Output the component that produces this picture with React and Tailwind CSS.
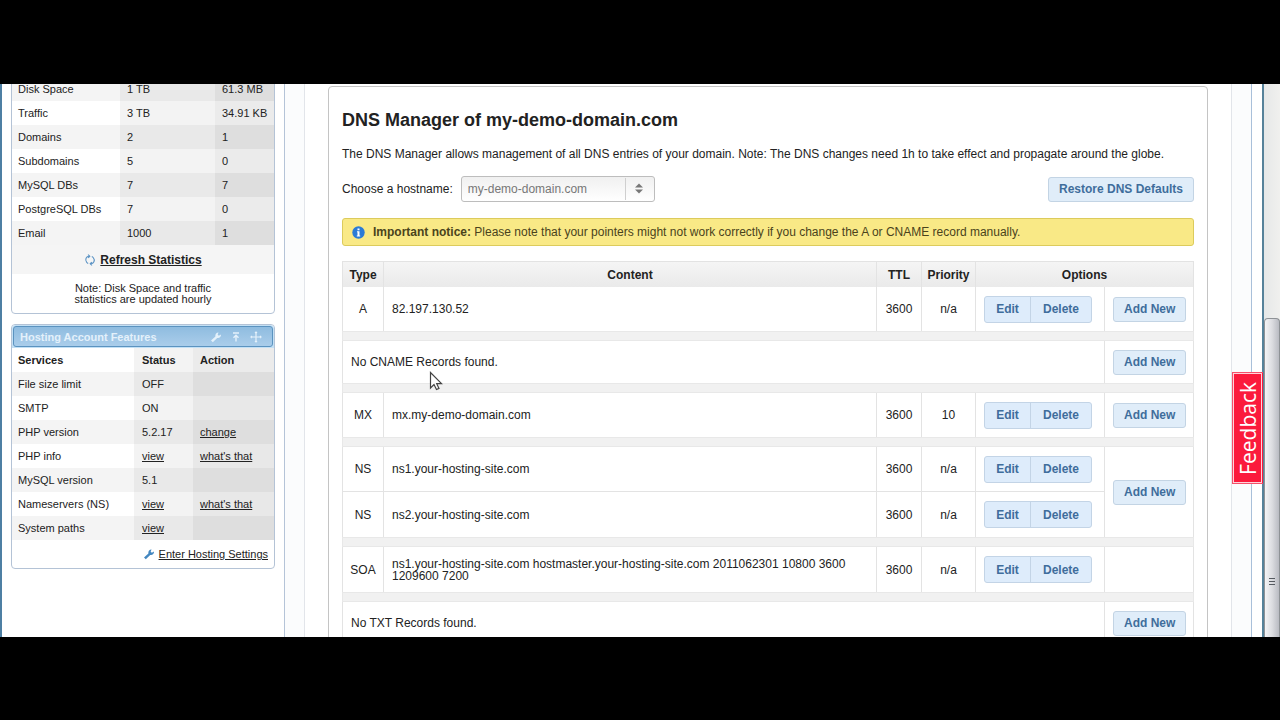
import React from "react";

const usage = [
  ["Disk Space", "1 TB", "61.3 MB"],
  ["Traffic", "3 TB", "34.91 KB"],
  ["Domains", "2", "1"],
  ["Subdomains", "5", "0"],
  ["MySQL DBs", "7", "7"],
  ["PostgreSQL DBs", "7", "0"],
  ["Email", "1000", "1"],
];

const features = [
  { name: "File size limit", status: "OFF" },
  { name: "SMTP", status: "ON" },
  { name: "PHP version", status: "5.2.17", action: "change" },
  { name: "PHP info", status: "view", statusLink: true, action: "what's that" },
  { name: "MySQL version", status: "5.1" },
  { name: "Nameservers (NS)", status: "view", statusLink: true, action: "what's that" },
  { name: "System paths", status: "view", statusLink: true },
];

function WrenchIcon({ className }) {
  return (
    <svg viewBox="0 0 12 12" className={className} fill="currentColor" aria-hidden="true">
      <path d="M1 9.6 5.4 5.4C5 3.6 6.2 1.6 8.6 1.6L7.6 3.6 8.8 4.8 11 3.6C11.2 6 9.2 7.4 7.2 6.9L2.8 11.2Z" />
    </svg>
  );
}

function RefreshIcon() {
  return (
    <svg viewBox="0 0 12 12" className="h-3 w-3 text-[#5b93c4]" fill="none" stroke="currentColor" strokeWidth="1.1" aria-hidden="true">
      <path d="M5.500 2.200C2 2 .8 6 2.600 8.200 3 8.800 3.600 9.200 4.200 9.500M6.500 9.800C10 10 11.200 6 9.400 3.800 9 3.200 8.400 2.800 7.800 2.500" />
      <path d="M4 .6 5.800 2.200 4.200 4M8 11.400 6.200 9.800 7.800 8" />
    </svg>
  );
}

function UsagePanel() {
  return (
    <section className="rounded-b border border-[#b4c3d6] bg-white">
      <table className="w-full table-fixed border-separate border-spacing-0">
        <colgroup>
          <col className="w-[108px]" />
          <col className="w-[95px]" />
          <col />
        </colgroup>
        <tbody>
          {usage.map(([name, limit, used], i) => (
            <tr key={name} className="h-6">
              <th scope="row" className={`px-1.5 text-left font-normal ${i % 2 ? "bg-white" : "bg-[#f4f4f4]"}`}>{name}</th>
              <td className={`px-[7px] ${i % 2 ? "bg-[#f3f3f3]" : "bg-[#e9e9e9]"}`}>{limit}</td>
              <td className={`whitespace-nowrap px-[7px] ${i % 2 ? "bg-[#ebebeb]" : "bg-[#dedede]"}`}>{used}</td>
            </tr>
          ))}
        </tbody>
      </table>
      <div className="flex h-[29px] items-center justify-center gap-1 bg-[#f5f5f5]">
        <RefreshIcon />
        <a href="#refresh" className="text-[12px] font-bold underline">Refresh Statistics</a>
      </div>
      <p className="px-14 pt-[9px] pb-2 text-center leading-[11px]">Note: Disk Space and traffic statistics are updated hourly</p>
    </section>
  );
}

function FeaturesPanel() {
  return (
    <section className="rounded border border-[#b4c3d6] bg-white">
      <header className="rounded-t bg-[#c3e0f5] p-px">
        <div className="flex h-[21px] items-center justify-between rounded-[3px] border border-[#5b93c0] bg-linear-to-b from-[#8fbce0] to-[#aacdea] px-1.5 text-[#e4f1fb]">
          <h2 className="font-bold">Hosting Account Features</h2>
          <div className="flex gap-2 pr-1">
            <WrenchIcon className="h-3 w-3" />
            <svg viewBox="0 0 12 12" className="h-3 w-3" fill="none" stroke="currentColor" strokeWidth="1.4" aria-hidden="true">
              <path d="M3 2H9M6 10.500V4.500M3.500 6.800 6 4.200 8.500 6.800" />
            </svg>
            <svg viewBox="0 0 12 12" className="h-3 w-3" fill="none" stroke="currentColor" strokeWidth="1.200" aria-hidden="true">
              <path d="M6 1V11M1 6H11" />
              <path d="M5 2 6 1 7 2M5 10 6 11 7 10M2 5 1 6 2 7M10 5 11 6 10 7" />
            </svg>
          </div>
        </div>
      </header>
      <table className="w-full table-fixed border-separate border-spacing-0">
        <colgroup>
          <col className="w-[122px]" />
          <col className="w-[59px]" />
          <col />
        </colgroup>
        <thead>
          <tr className="h-6 text-left">
            <th className="bg-white px-1.5">Services</th>
            <th className="bg-[#f3f3f3] px-2">Status</th>
            <th className="bg-[#ebebeb] px-[7px]">Action</th>
          </tr>
        </thead>
        <tbody>
          {features.map((f, i) => (
            <tr key={f.name} className="h-6">
              <td className={`px-1.5 ${i % 2 ? "bg-white" : "bg-[#f4f4f4]"}`}>{f.name}</td>
              <td className={`px-2 ${i % 2 ? "bg-[#f3f3f3]" : "bg-[#e9e9e9]"}`}>
                {f.statusLink ? <a href="#view" className="underline">{f.status}</a> : f.status}
              </td>
              <td className={`px-[7px] ${i % 2 ? "bg-[#e8e8e8]" : "bg-[#dedede]"}`}>
                {f.action && <a href="#action" className="underline">{f.action}</a>}
              </td>
            </tr>
          ))}
        </tbody>
      </table>
      <div className="flex h-7 items-center justify-end gap-1 pr-1.5">
        <WrenchIcon className="h-3 w-3 text-[#4387c0]" />
        <a href="#settings" className="underline">Enter Hosting Settings</a>
      </div>
    </section>
  );
}

const buttonText = "text-[12px] font-bold text-[#3f6d9c]";

function BlueButton({ children }) {
  return (
    <button type="button" className={`h-[25px] whitespace-nowrap rounded-[3px] border border-[#c3d4e4] bg-[#e0edf9] px-2.5 ${buttonText}`}>
      {children}
    </button>
  );
}

function EditDelete() {
  return (
    <div className="flex h-[27px] w-[108px] rounded-[3px] border border-[#c3d4e6] bg-[#deecfb]">
      <button type="button" className={`w-[46px] border-r border-[#c3d4e6] ${buttonText}`}>Edit</button>
      <button type="button" className={`flex-1 ${buttonText}`}>Delete</button>
    </div>
  );
}

const cell = "border-r border-[#e3e3e3]";

function RecordCells({ type, content, ttl = "3600", priority = "n/a", line = "" }) {
  return (
    <>
      <td className={`${cell} ${line} border-l text-center`}>{type}</td>
      <td className={`${cell} ${line} px-2 leading-3`}>{content}</td>
      <td className={`${cell} ${line} text-center`}>{ttl}</td>
      <td className={`${cell} ${line} text-center`}>{priority}</td>
      <td className={`${cell} ${line} px-2`}><EditDelete /></td>
    </>
  );
}

function AddCell({ rows = 1, empty = false }) {
  return (
    <td rowSpan={rows} className={`${cell} px-2`}>
      {!empty && <BlueButton>Add New</BlueButton>}
    </td>
  );
}

function Divider() {
  return (
    <tr className="h-2.5">
      <td colSpan={6} className="border border-[#e8e8e8] bg-[#f1f1f1]" />
    </tr>
  );
}

function EmptyRow({ kind }) {
  return (
    <tr className="h-[42px]">
      <td colSpan={5} className={`${cell} border-l px-2`}>No {kind} Records found.</td>
      <AddCell />
    </tr>
  );
}

function DnsTable() {
  const head = "border-t border-r border-[#e3e3e3] bg-linear-to-b from-[#f5f5f5] to-[#eaeaea]";
  return (
    <table className="mt-[15px] w-full table-fixed border-separate border-spacing-0">
      <colgroup>
        <col className="w-[42px]" />
        <col />
        <col className="w-[45px]" />
        <col className="w-[54px]" />
        <col className="w-[129px]" />
        <col className="w-[89px]" />
      </colgroup>
      <thead>
        <tr className="h-[26px]">
          <th className={`${head} border-l`}>Type</th>
          <th className={head}>Content</th>
          <th className={head}>TTL</th>
          <th className={head}>Priority</th>
          <th className={head} colSpan={2}>Options</th>
        </tr>
      </thead>
      <tbody>
        <tr className="h-11">
          <RecordCells type="A" content="82.197.130.52" />
          <AddCell />
        </tr>
        <Divider />
        <EmptyRow kind="CNAME" />
        <Divider />
        <tr className="h-11">
          <RecordCells type="MX" content="mx.my-demo-domain.com" priority="10" />
          <AddCell />
        </tr>
        <Divider />
        <tr className="h-[45px]">
          <RecordCells type="NS" content="ns1.your-hosting-site.com" line="border-b" />
          <AddCell rows={2} />
        </tr>
        <tr className="h-[45px]">
          <RecordCells type="NS" content="ns2.your-hosting-site.com" />
        </tr>
        <Divider />
        <tr className="h-[45px]">
          <RecordCells type="SOA" content="ns1.your-hosting-site.com hostmaster.your-hosting-site.com 2011062301 10800 3600 1209600 7200" />
          <AddCell empty />
        </tr>
        <Divider />
        <EmptyRow kind="TXT" />
      </tbody>
    </table>
  );
}

function DnsManager() {
  return (
    <section className="rounded-t border border-[#c4c4c4] bg-white px-[13px] pt-[21px] text-[12px] leading-4">
      <h1 className="text-[18px] leading-6 font-bold">DNS Manager of my-demo-domain.com</h1>
      <p className="mt-3.5">The DNS Manager allows management of all DNS entries of your domain. Note: The DNS changes need 1h to take effect and propagate around the globe.</p>
      <div className="mt-3.5 flex items-center justify-between">
        <div className="flex items-center gap-2">
          <label htmlFor="hostname">Choose a hostname:</label>
          <div className="relative">
            <select id="hostname" className="h-[26px] w-[194px] appearance-none rounded-[3px] border border-[#bdbdbd] bg-linear-to-b from-[#f0f0f0] to-white px-1.5 text-[12px] text-[#777]">
              <option>my-demo-domain.com</option>
            </select>
            <svg viewBox="0 0 28 22" className="pointer-events-none absolute top-0.5 right-0.5 h-[22px] w-7" aria-hidden="true">
              <path d="M.5 0V22" stroke="#cfcfcf" />
              <path d="M14 5.500 18 9.500H10ZM14 15.500 10 11.500H18Z" fill="#777" />
            </svg>
          </div>
        </div>
        <BlueButton>Restore DNS Defaults</BlueButton>
      </div>
      <div className="mt-4 flex h-7 items-center gap-2 rounded-[3px] border border-[#dccb5c] bg-[#f9e986] px-[9px] text-[#4a431c]">
        <svg viewBox="0 0 13 13" className="h-[13px] w-[13px] shrink-0" aria-hidden="true">
          <circle cx="6.500" cy="6.500" r="6.200" fill="#2b7bd6" />
          <path d="M5.500 2.500H7.500V4.200H5.500ZM5 5.200H7.500V9.500H8.200V10.500H4.800V9.500H5.500V6.200H5Z" fill="#fff" />
        </svg>
        <p><b>Important notice:</b> Please note that your pointers might not work correctly if you change the A or CNAME record manually.</p>
      </div>
      <DnsTable />
    </section>
  );
}

function Scrollbar() {
  return (
    <div className="flex w-4 shrink-0 flex-col bg-linear-to-r from-[#e6e8e8] to-[#f0f0ee] pt-[234px]" aria-hidden="true">
      <div className="flex flex-1 justify-center rounded-t-sm border border-b-0 border-[#8e9296] bg-linear-to-r from-[#f4f4f6] via-[#dcdde1] to-[#b9bbc2] pt-[258px]">
        <svg viewBox="0 0 8 10" className="h-2.5 w-2" stroke="#555a60">
          <path d="M1 1.500H7M1 4.500H7M1 7.500H7" />
        </svg>
      </div>
    </div>
  );
}

export default function App() {
  return (
    <div className="flex h-screen flex-col bg-black pt-[84px] pb-[83px] font-['Liberation_Sans',Arial,sans-serif] text-[11px] leading-4 text-[#222]">
      <div className="relative flex min-h-0 flex-1 overflow-hidden bg-white">
        <div className="flex min-w-0 flex-1 border-l-2 border-r-2 border-l-[#4d7fa3] border-r-[#56829a]">
          <aside className="-mt-2 flex w-[282px] shrink-0 flex-col gap-2.5 pr-[9px] pl-[9px]">
            <UsagePanel />
            <FeaturesPanel />
          </aside>
          <div className="w-[21px] shrink-0 border-x border-l-[#b5c4d8] border-r-[#e2e5ea] bg-[#fbfcfd]" />
          <main className="min-w-0 flex-1 px-[23px] pt-0.5">
            <DnsManager />
          </main>
          <div className="w-[21px] shrink-0 border-x border-l-[#e2e5ea] border-r-[#a9c0da] bg-[#fbfcfd]" />
          <div className="w-2.5 shrink-0" />
        </div>
        <Scrollbar />
        <button type="button" className="absolute top-[288px] right-[17px] flex h-28 w-[31px] items-center justify-center border border-r-0 border-[#f5506a] bg-[#fb1a3c] font-['Open_Sans',sans-serif] text-[21px] font-medium text-white outline-1 -outline-offset-2 outline-[#ffd3da]">
          <span className="rotate-180 [writing-mode:vertical-rl]">Feedback</span>
        </button>
        <svg viewBox="0 0 14 20" className="absolute top-[287px] left-[429px] h-5 w-3.5" aria-hidden="true">
          <path d="M1.500 1.500V17L5 13.600 7.500 18.500 10 17.400 7.700 12.700H12.500Z" fill="#fff" stroke="#444" strokeWidth="1.200" />
        </svg>
      </div>
    </div>
  );
}
